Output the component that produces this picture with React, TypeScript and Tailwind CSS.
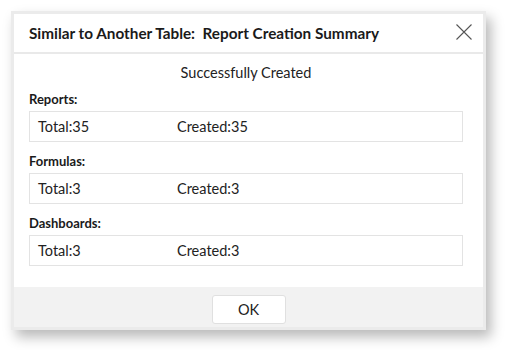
const sections = [
  { label: "Reports:", total: 35, created: 35 },
  { label: "Formulas:", total: 3, created: 3 },
  { label: "Dashboards:", total: 3, created: 3 },
];

export default function App() {
  return (
    <div
      className="w-[507px] h-[350px] bg-white pl-[11px] pt-[11px]"
      style={{ fontFamily: "Lato, 'Open Sans', sans-serif" }}
    >
      <div className="w-[475px] border-[3px] border-[#ebebeb] bg-white shadow-[5px_7px_12px_rgba(0,0,0,0.28)]">
        {/* Header */}
        <div className="h-[40px] flex items-center justify-between pl-[15px] pr-[11px] border-b-2 border-[#e9e9e9]">
          <h3 className="text-[15.3px] font-bold text-[#1a1a1a]">
            Similar to Another Table:&nbsp; Report Creation Summary
          </h3>
          <svg className="w-[16px] h-[16px] -mt-[2px]" viewBox="0 0 16 16" fill="none">
            <path d="M0.5 0.5L15.5 15.5M15.5 0.5L0.5 15.5" stroke="#555" strokeWidth={1.1} />
          </svg>
        </div>

        {/* Body */}
        <div className="pl-[15px] pr-[20px] pt-[9px] pb-[21px] text-[14.5px]">
          <p className="h-5 leading-5 text-center text-[#222]">
            Successfully Created
          </p>
          {sections.map((s, i) => (
            <div key={i} className={i === 0 ? "mt-[6px]" : "mt-[9px]"}>
              <div className="h-5 leading-5 text-[13px] font-bold text-[#1a1a1a] mb-[2px]">
                {s.label}
              </div>
              <div className="h-[31px] border border-[#e3e3e3] flex items-center pl-[8px] text-[#222]">
                <span className="w-[139px]">Total:{s.total}</span>
                <span>Created:{s.created}</span>
              </div>
            </div>
          ))}
        </div>

        {/* Footer */}
        <div className="h-[40px] bg-[#f2f2f2] flex justify-center pt-[8px]">
          <button
            type="button"
            className="w-[74px] h-[29px] bg-white border border-[#e0e0e0] rounded-[3px] text-[14.5px] text-[#222]"
          >
            OK
          </button>
        </div>
      </div>
    </div>
  );
}
